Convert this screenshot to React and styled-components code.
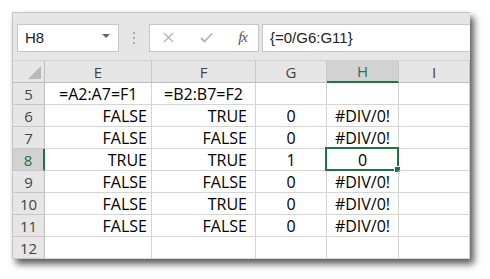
import { Fragment } from "react";
import styled, { createGlobalStyle } from "styled-components";

const GlobalStyle = createGlobalStyle`
  html, body {
    margin: 0;
    padding: 0;
    background: #ffffff;
  }
`;

const Page = styled.div`
  width: 490px;
  height: 279px;
  padding: 12px 0 0 12px;
  box-sizing: border-box;
`;

const Window = styled.div`
  width: 458px;
  height: 247px;
  box-sizing: border-box;
  border: 1px solid #c4c4c4;
  border-right: none;
  border-bottom: none;
  background: #e6e6e6;
  box-shadow: 4px 5px 7px rgba(0, 0, 0, 0.65);
  overflow: hidden;
  display: flex;
  flex-direction: column;
`;

const FormulaBar = styled.div`
  display: flex;
  align-items: center;
  height: 48px;
  padding: 2px 0 0 4px;
  box-sizing: border-box;
`;

const NameBox = styled.div`
  width: 102px;
  height: 28px;
  box-sizing: border-box;
  background: #fff;
  border: 1px solid #c6c6c6;
  display: flex;
  align-items: center;
  justify-content: space-between;
  padding: 0 8px 0 7px;
  font-family: "Liberation Sans", Arial, sans-serif;
  font-size: 15px;
  color: #222;
`;

const DropArrow = styled.span`
  width: 0;
  height: 0;
  border-left: 4px solid transparent;
  border-right: 4px solid transparent;
  border-top: 4px solid #666;
  margin-top: -4px;
`;

const Grip = styled.div`
  width: 30px;
  display: flex;
  justify-content: center;
`;

const ButtonBox = styled.div`
  width: 110px;
  height: 28px;
  box-sizing: border-box;
  background: #fff;
  border: 1px solid #c6c6c6;
  display: flex;
  align-items: center;
  justify-content: space-between;
  padding: 0 11px 0 13px;
`;

const Fx = styled.span`
  font-family: "Liberation Serif", "Times New Roman", serif;
  font-style: italic;
  font-size: 15px;
  color: #555;
  letter-spacing: -1px;
`;

const FormulaInput = styled.div`
  flex: 1;
  margin-left: 3px;
  height: 28px;
  box-sizing: border-box;
  background: #fff;
  border: 1px solid #c6c6c6;
  border-right: none;
  display: flex;
  align-items: center;
  padding-left: 7px;
  font-family: "Liberation Sans", Arial, sans-serif;
  font-size: 15px;
  color: #222;
`;

const Sheet = styled.div`
  display: grid;
  grid-template-columns: 32px 107px 104px 71px 72px 71px;
  grid-auto-rows: 22px;
  background: #fff;
  border-top: 1px solid #d0d0d0;
`;

const ColHead = styled.div`
  background: ${(p) => (p.$active ? "#d2d2d2" : "#e6e6e6")};
  border-right: 1px solid #c8c8c8;
  border-bottom: ${(p) => (p.$active ? "2px solid #217346" : "1px solid #bdbdbd")};
  box-sizing: border-box;
  display: flex;
  align-items: center;
  justify-content: center;
  font-family: "Open Sans", sans-serif;
  font-size: 15px;
  color: ${(p) => (p.$active ? "#217346" : "#444")};
`;

const Corner = styled.div`
  background: #e6e6e6;
  border-right: 1px solid #bdbdbd;
  border-bottom: 1px solid #bdbdbd;
  box-sizing: border-box;
  display: flex;
  align-items: flex-end;
  justify-content: flex-end;
  padding: 0 3px 3px 0;
`;

const RowHead = styled.div`
  background: ${(p) => (p.$active ? "#d2d2d2" : "#e6e6e6")};
  border-right: ${(p) => (p.$active ? "2px solid #217346" : "1px solid #bdbdbd")};
  border-bottom: 1px solid #c8c8c8;
  box-sizing: border-box;
  display: flex;
  align-items: center;
  justify-content: center;
  font-family: "Open Sans", sans-serif;
  font-size: 15px;
  color: ${(p) => (p.$active ? "#217346" : "#444")};
`;

const Cell = styled.div`
  position: relative;
  border-right: 1px solid #d4d4d4;
  border-bottom: 1px solid #d4d4d4;
  box-sizing: border-box;
  display: flex;
  align-items: center;
  justify-content: ${(p) => p.$align || "flex-end"};
  padding: 0 ${(p) => p.$pr ?? 4}px 0 ${(p) => p.$pl ?? 4}px;
  font-family: "Open Sans", sans-serif;
  font-size: 16px;
  color: #000;
  white-space: nowrap;
`;

const Selection = styled.span`
  position: absolute;
  left: -2px;
  top: -2px;
  right: -1px;
  bottom: -1px;
  border: 2px solid #217346;
  pointer-events: none;
  &::after {
    content: "";
    position: absolute;
    right: -4px;
    bottom: -4px;
    width: 5px;
    height: 5px;
    background: #217346;
    border: 1px solid #fff;
  }
`;

const cols = ["E", "F", "G", "H", "I"];

const rows = [
  { n: 5, e: "=A2:A7=F1", f: "=B2:B7=F2", g: "", h: "" },
  { n: 6, e: "FALSE", f: "TRUE", g: "0", h: "#DIV/0!" },
  { n: 7, e: "FALSE", f: "FALSE", g: "0", h: "#DIV/0!" },
  { n: 8, e: "TRUE", f: "TRUE", g: "1", h: "0" },
  { n: 9, e: "FALSE", f: "FALSE", g: "0", h: "#DIV/0!" },
  { n: 10, e: "FALSE", f: "TRUE", g: "0", h: "#DIV/0!" },
  { n: 11, e: "FALSE", f: "FALSE", g: "0", h: "#DIV/0!" },
  { n: 12, e: "", f: "", g: "", h: "" },
];

export default function App() {
  return (
    <Page>
      <GlobalStyle />
      <Window>
        <FormulaBar>
          <NameBox>
            H8
            <DropArrow />
          </NameBox>
          <Grip>
            <svg width="4" height="14" viewBox="0 0 4 14">
              <rect x="1" y="1" width="2" height="2" fill="#a8a8a8" />
              <rect x="1" y="6" width="2" height="2" fill="#a8a8a8" />
              <rect x="1" y="11" width="2" height="2" fill="#a8a8a8" />
            </svg>
          </Grip>
          <ButtonBox>
            <svg width="11" height="11" viewBox="0 0 11 11">
              <path d="M1 1L10 10M10 1L1 10" stroke="#b4b4b4" strokeWidth="1.4" />
            </svg>
            <svg width="13" height="11" viewBox="0 0 13 11">
              <path d="M1 6L4.5 9.5L12 1.5" stroke="#b4b4b4" strokeWidth="1.8" fill="none" />
            </svg>
            <Fx>fx</Fx>
          </ButtonBox>
          <FormulaInput>{"{=0/G6:G11}"}</FormulaInput>
        </FormulaBar>
        <Sheet>
          <Corner>
            <svg width="13" height="13" viewBox="0 0 13 13">
              <path d="M13 0L13 13L0 13Z" fill="#b9b9b9" />
            </svg>
          </Corner>
          {cols.map((c) => (
            <ColHead key={c} $active={c === "H"}>
              {c}
            </ColHead>
          ))}
          {rows.map((r) => (
            <Fragment key={r.n}>
              <RowHead $active={r.n === 8}>{r.n}</RowHead>
              {r.n === 5 ? (
                <>
                  <Cell $align="flex-start" $pl={14}>{r.e}</Cell>
                  <Cell $align="flex-start" $pl={12}>{r.f}</Cell>
                </>
              ) : (
                <>
                  <Cell>{r.e}</Cell>
                  <Cell $pr={8}>{r.f}</Cell>
                </>
              )}
              <Cell $align="center">{r.g}</Cell>
              <Cell $align="center">
                {r.h}
                {r.n === 8 && <Selection />}
              </Cell>
              <Cell />
            </Fragment>
          ))}
        </Sheet>
      </Window>
    </Page>
  );
}
